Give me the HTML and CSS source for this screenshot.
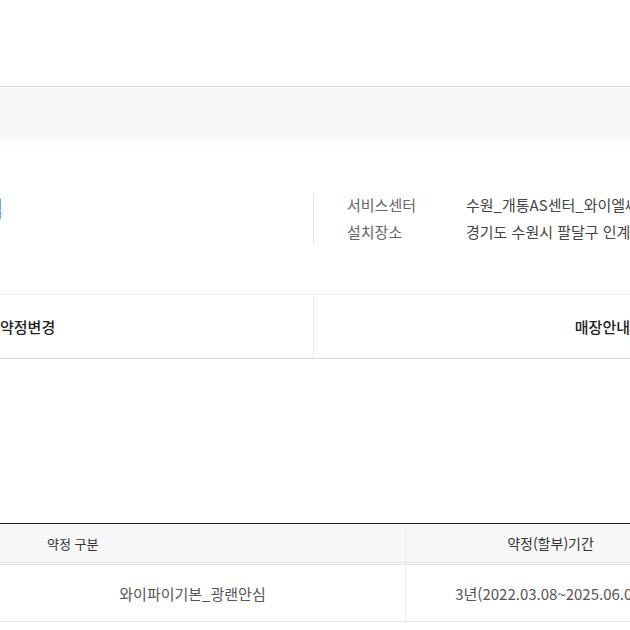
FILE: index.html
```html
<!DOCTYPE html>
<html lang="ko">
<head>
    <meta charset="UTF-8">
    <meta name="viewport" content="width=device-width, initial-scale=1.0">
    <title>가입정보</title>
    <link rel="stylesheet" href="styles.css">
</head>
<body>
    <div class="top"></div>
    <div class="band"></div>

    <!-- 고객 정보 -->
    <section class="info">
        <div class="info-left">
            <h2 class="title">고객님</h2>
            <p class="sub">인터넷</p>
        </div>
        <dl class="info-right">
            <div class="info-row">
                <dt>서비스센터</dt>
                <dd>수원_개통AS센터_와이엘씨앤씨</dd>
            </div>
            <div class="info-row">
                <dt>설치장소</dt>
                <dd>경기도 수원시 팔달구 인계동</dd>
            </div>
        </dl>
    </section>

    <div class="actions">
        <a class="action action-left">약정변경</a>
        <a class="action action-right">매장안내</a>
    </div>

    <!-- 약정 정보 -->
    <div class="table-wrap">
        <div class="grid head">
            <div class="cell cell-first">약정 구분</div>
            <div class="cell">약정(할부)기간</div>
        </div>
        <div class="grid body-row">
            <div class="cell">와이파이기본_광랜안심</div>
            <div class="cell">3년(2022.03.08~2025.06.08)</div>
        </div>
    </div>
</body>
</html>
```

FILE: styles.css
```css
* {
    margin: 0;
    padding: 0;
    box-sizing: border-box;
}

body {
    width: 630px;
    overflow: hidden;
    background-color: #fff;
    font-family: "Noto Sans CJK KR", "Noto Sans", sans-serif;
    color: #333;
}

.top {
    height: 86px;
}

.band {
    height: 62px;
    border-top: 1px solid #dcdcdc;
    background: linear-gradient(#f7f7f7 80%, #fff);
}

/* 고객 정보 */
.info {
    display: flex;
    margin-top: 44px;
}

.info-left {
    flex-shrink: 0;
    width: 313px;
    overflow: hidden;
}

.title {
    margin-left: -58px;
    font-size: 22px;
    font-weight: 700;
    line-height: 30px;
    color: #111;
    white-space: nowrap;
}

.sub {
    margin-left: -40px;
    margin-top: 2px;
    font-size: 14px;
    color: #f5f5f5;
}

.info-right {
    flex-shrink: 0;
    border-left: 1px solid #e6e6e6;
    padding-left: 33px;
    height: 52px;
    margin-top: 1px;
}

.info-row {
    display: flex;
    font-size: 15px;
    line-height: 27px;
    white-space: nowrap;
}

.info-row:first-child {
    margin-top: -2px;
}

.info-row dt {
    width: 119px;
    color: #666;
}

.info-row dd {
    color: #444;
}

/* 버튼 */
.actions {
    display: grid;
    grid-template-columns: 313px 1fr;
    height: 65px;
    margin-top: 49px;
    border-top: 1px solid #efefef;
    border-bottom: 1px solid #dcdcdc;
}

.action {
    display: flex;
    align-items: center;
    font-size: 15px;
    font-weight: 500;
    color: #222;
}

.action-right {
    justify-content: flex-end;
    border-left: 1px solid #ececec;
}

/* 약정 테이블 */
.table-wrap {
    width: 715px;
    margin-left: -20px;
    margin-top: 164px;
    border-top: 1px solid #222;
}

.grid {
    display: grid;
    grid-template-columns: 425px 290px;
}

.cell {
    display: flex;
    align-items: center;
    justify-content: center;
}

.cell + .cell {
    border-left: 1px solid #ececec;
}

.head {
    height: 41px;
    background-color: #f7f7f7;
    border-bottom: 3px double #e4e4e4;
    font-size: 13px;
    color: #333;
}

.head .cell + .cell {
    font-size: 14px;
}

.head .cell-first {
    justify-content: flex-start;
    padding-left: 67px;
}

.body-row {
    height: 57px;
    border-bottom: 1px solid #e4e4e4;
    font-size: 15px;
    color: #555;
}
```
